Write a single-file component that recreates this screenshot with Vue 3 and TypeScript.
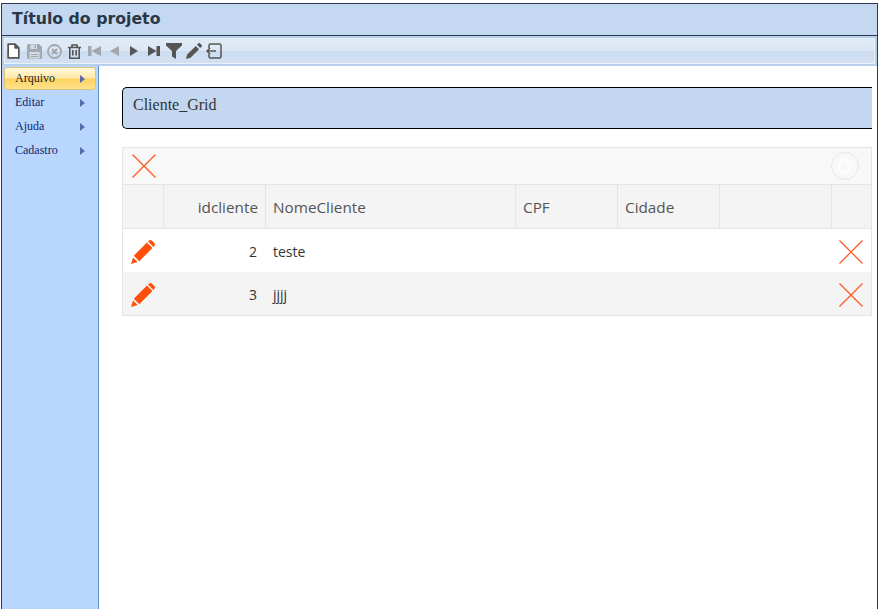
<template>
  <div class="page">
    <div class="frame">
      <header class="title-bar">Título do projeto</header>
      <div class="toolbar">
        <div class="toolbar-inner">
          <svg class="tb-new" width="13" height="16" viewBox="0 0 12 15"><path d="M1 1h6.500L11 4.500V14H1zM7.500 1v3.500H11" fill="#fff" stroke="#555" stroke-width="1.600" stroke-linejoin="round"/></svg>
          <svg class="tb-save" width="15" height="15" viewBox="0 0 15 15"><path d="M0 1.500A1.500 1.500 0 0 1 1.500 0H12l3 3v10.500a1.500 1.500 0 0 1-1.500 1.500h-12A1.500 1.500 0 0 1 0 13.500z" fill="#a3a8ae"/><path d="M3.500 0.500h6.500v4.500H3.500zM2.500 8h10v6.500h-10z" fill="#d3dde8"/><path d="M7.500 1.200h1.500v3H7.500zM4 10h7v1H4zM4 12h7v1H4z" fill="#a3a8ae"/></svg>
          <svg class="tb-cancel" width="15" height="15" viewBox="0 0 15 15"><circle cx="7.500" cy="7.500" r="6.500" fill="none" stroke="#a4a8ad" stroke-width="1.800"/><path d="M5 5l5 5M10 5l-5 5" stroke="#a4a8ad" stroke-width="2"/></svg>
          <svg class="tb-trash" width="13" height="15" viewBox="0 0 13 15"><path d="M0 3.500h13M4 3.500V1h5v2.500M1.800 3.500v10.700h9.400V3.500M4.800 6v5.500M8.200 6v5.500" fill="none" stroke="#555" stroke-width="1.600"/></svg>
          <svg class="tb-first" width="13" height="10" viewBox="0 0 13 10"><path d="M0 0h3.500v10H0zM13 0v10L3.500 5z" fill="#a4a8ad"/></svg>
          <svg class="tb-prev" width="9" height="10" viewBox="0 0 9 10"><path d="M9 0v10L0 5z" fill="#a4a8ad"/></svg>
          <svg class="tb-next" width="8" height="10" viewBox="0 0 8 10"><path d="M0 0v10l8-5z" fill="#555"/></svg>
          <svg class="tb-last" width="12" height="10" viewBox="0 0 12 10"><path d="M0 0v10l8.500-5zM8.500 0H12v10H8.500z" fill="#555"/></svg>
          <svg class="tb-filter" width="16" height="16" viewBox="0 0 16 16"><path d="M0 0h16v2.500L10 8v8L6 13.500V8L0 2.500z" fill="#555"/></svg>
          <svg class="tb-pencil" width="16" height="16" viewBox="0 0 16 16"><path d="M0 16l1.200-4.500L9.800 3l3.300 3.300-8.600 8.500zM11 1.800L12.500 0.300a1 1 0 0 1 1.400 0l1.800 1.800a1 1 0 0 1 0 1.400L14.200 5z" fill="#555"/></svg>
          <svg class="tb-exit" width="16" height="16" viewBox="0 0 16 16"><path d="M3 5V2.500A1.500 1.500 0 0 1 4.500 1h9A1.500 1.500 0 0 1 15 2.500v11a1.500 1.500 0 0 1-1.500 1.500h-9A1.500 1.500 0 0 1 3 13.500V11M10 8H1M4 5L1 8l3 3" fill="none" stroke="#555" stroke-width="1.500"/></svg>
        </div>
      </div>
      <div class="body">
        <nav class="sidebar">
          <a v-for="(item, i) in menu" :key="item" class="menu-item" :class="{ active: i === 0 }">
            <span>{{ item }}</span>
            <i class="caret"></i>
          </a>
        </nav>
        <main class="content">
          <div class="panel-title">Cliente_Grid</div>
          <div class="grid">
            <div class="grid-tools">
              <svg width="24" height="24" viewBox="0 0 24 24"><path d="M0.500 0.500l23 23M23.500 0.500l-23 23" stroke="#ff5a1f" stroke-width="1.300" fill="none"/></svg>
              <span class="refresh">
                <svg width="18" height="18" viewBox="0 0 18 18"><path d="M13.500 5A6 6 0 1 0 15 9" fill="none" stroke="#fdfdfd" stroke-width="2.400"/><path d="M15.500 2v5.500h-5.500z" fill="#fdfdfd"/></svg>
              </span>
            </div>
            <div class="row head">
              <div class="cell"></div>
              <div class="cell num">idcliente</div>
              <div class="cell">NomeCliente</div>
              <div class="cell">CPF</div>
              <div class="cell">Cidade</div>
              <div class="cell"></div>
              <div class="cell"></div>
            </div>
            <div v-for="(r, i) in rows" :key="r.id" class="row" :class="{ alt: i % 2 === 1 }">
              <div class="cell icon">
                <svg width="24" height="24" viewBox="0 0 24 24"><path d="M0 24L2 17.400 6.600 22zM2.800 15.700L15.900 2.600l5.500 5.500L8.300 21.200zM17 1.500L18.200 0.500Q19.500-0.300 20.800 0.500L23.500 3.200Q24.300 4.500 23.500 5.800L22.500 7z" fill="#ff4f0a"/></svg>
              </div>
              <div class="cell num data">{{ r.id }}</div>
              <div class="cell data">{{ r.nome }}</div>
              <div class="cell"></div>
              <div class="cell"></div>
              <div class="cell"></div>
              <div class="cell del">
                <svg width="24" height="24" viewBox="0 0 24 24"><path d="M0.500 0.500l23 23M23.500 0.500l-23 23" stroke="#ff5a1f" stroke-width="1.300" fill="none"/></svg>
              </div>
            </div>
          </div>
        </main>
      </div>
    </div>
  </div>
</template>

<script setup lang="ts">
interface Cliente { id: number; nome: string }

const menu: string[] = ['Arquivo', 'Editar', 'Ajuda', 'Cadastro']
const rows: Cliente[] = [
  { id: 2, nome: 'teste' },
  { id: 3, nome: 'jjjj' },
]
</script>

<style>
html, body { margin: 0; background: #fff; overflow: hidden; }
</style>

<style scoped>
.page {
  width: 880px;
  height: 609px;
  box-sizing: border-box;
  padding: 3px 1px 0 1px;
  background: #fff;
  overflow: hidden;
}

.frame {
  height: 606px;
  width: 877px;
  box-sizing: border-box;
  border: 1px solid #2f3b4a;
  border-bottom: none;
  display: flex;
  flex-direction: column;
}

.title-bar {
  height: 32px;
  flex: none;
  box-sizing: border-box;
  padding: 5px 0 0 10px;
  background: #c4d8f1;
  border-bottom: 1px solid #2f3b4a;
  font: bold 15.75px/20px 'DejaVu Sans', sans-serif;
  color: #2b3744;
}

.toolbar {
  height: 30px;
  box-sizing: border-box;
  padding: 2px;
  background: #b7d0ee;
  flex: none;
}

.toolbar-inner {
  height: 100%;
  box-sizing: border-box;
  display: flex;
  align-items: center;
  background: linear-gradient(180deg, #e1ebf7 0%, #dce7f5 48%, #cbdcf0 52%, #d3e1f2 100%);
  border: 1px solid #e8f0fa;
}

.toolbar-inner svg { flex: none; }
.tb-new { margin-left: 2px; }
.tb-save { margin-left: 7px; }
.tb-cancel { margin-left: 5px; }
.tb-trash { margin-left: 6px; }
.tb-first { margin-left: 7px; }
.tb-prev { margin-left: 9px; }
.tb-next { margin-left: 11px; }
.tb-last { margin-left: 10px; }
.tb-filter { margin-left: 6px; }
.tb-pencil { margin-left: 4px; }
.tb-exit { margin-left: 4px; }

.body {
  flex: 1;
  display: flex;
  min-height: 0;
}

.sidebar {
  width: 97px;
  flex: none;
  box-sizing: border-box;
  background: #b9d7fe;
  border-right: 1px solid #5f8fc4;
  padding: 1px 2px 0 2px;
  display: flex;
  flex-direction: column;
  gap: 1px;
}

.menu-item {
  height: 23px;
  box-sizing: border-box;
  display: flex;
  align-items: center;
  justify-content: space-between;
  padding: 0 10px;
  border: 1px solid transparent;
  border-radius: 3px;
  font: 12px 'Liberation Serif', serif;
  color: #0f1f6b;
}

.menu-item.active {
  color: #222;
  border-color: #dcc27a;
  background: linear-gradient(180deg, #fff8dc 0%, #ffe9a8 48%, #ffd25e 52%, #ffe28f 100%);
}

.caret {
  width: 0;
  height: 0;
  border-left: 5px solid #5a6aa8;
  border-top: 4px solid transparent;
  border-bottom: 4px solid transparent;
}

.content {
  flex: 1;
  min-width: 0;
  box-sizing: border-box;
  padding: 21px 5px 0 23px;
}

.panel-title {
  height: 42px;
  box-sizing: border-box;
  padding: 7px 0 0 10px;
  background: #c3d7f0;
  border: 1px solid #000;
  border-right: none;
  border-radius: 5px 0 0 5px;
  font: 16px/20px 'Liberation Serif', serif;
  color: #333;
}

.grid {
  margin-top: 18px;
  border: 1px solid #e5e5e5;
  font: 14px 'Open Sans', sans-serif;
  color: #333;
}

.grid-tools {
  height: 37px;
  box-sizing: border-box;
  background: #f8f8f8;
  border-bottom: 1px solid #e5e5e5;
  display: flex;
  align-items: center;
  justify-content: space-between;
  padding: 0 12px 0 9px;
}

.refresh {
  width: 28px;
  height: 28px;
  box-sizing: border-box;
  border: 1px solid #e6e6e6;
  border-radius: 50%;
  display: flex;
  align-items: center;
  justify-content: center;
}

.row {
  display: grid;
  box-sizing: border-box;
  grid-template-columns: 40px 102px 250px 102px 102px 112px 1fr;
  height: 43px;
}

.row.head {
  height: 44px;
  background: #f4f4f4;
  border-bottom: 1px solid #e5e5e5;
  color: #555;
  font-size: 15.3px;
}

.row.head .cell + .cell { border-left: 1px solid #e5e5e5; }
.row.alt { background: #f4f4f4; }

.cell {
  box-sizing: border-box;
  display: flex;
  align-items: center;
  padding: 0 7px;
  min-width: 0;
}

.cell.num { justify-content: flex-end; }
.cell.data { padding: 2px 0 0 8px; }
.cell.num.data { padding-right: 8px; }
.cell.icon { padding: 2px 0 0 8px; }
.cell.del { padding: 2px 0 0 8px; }
</style>
